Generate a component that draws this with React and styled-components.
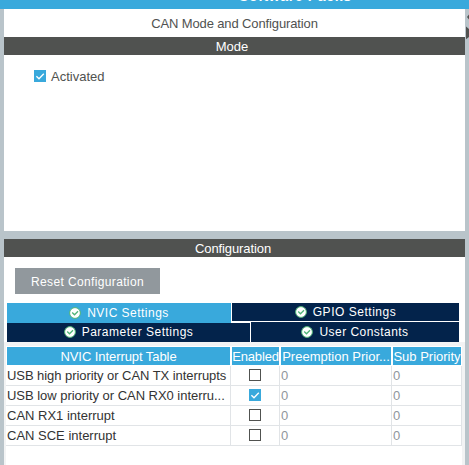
import React from "react";
import styled, { createGlobalStyle } from "styled-components";

const Global = createGlobalStyle`
  * { box-sizing: border-box; }
  body { margin: 0; overflow: hidden; }
`;

const Window = styled.div`
  width: 469px;
  height: 465px;
  overflow: hidden;
  display: flex;
  flex-direction: column;
  background: #b9c4ca;
  color: #505250;
  font: 13px/18px "Liberation Sans", Arial, sans-serif;
  white-space: nowrap;
`;

const TopBar = styled.header`
  height: 9px;
  flex: none;
  display: flex;
  align-items: flex-end;
  padding: 0 0 5px 239px;
  overflow: hidden;
  background: #39a9dc;
  color: #fff;
  font-weight: bold;
  font-size: 14px;
  line-height: 16px;
  letter-spacing: 0.65px;
`;

const Body = styled.div`
  flex: 1;
  display: grid;
  grid-template-columns: 4px 461px 4px;
`;

const Content = styled.main`
  grid-column: 2;
  display: flex;
  flex-direction: column;
  gap: 8px;
`;

const Scroller = styled.svg`
  grid-column: 3;
  display: block;
`;

const Panel = styled.section`
  height: ${(p) => p.$height}px;
  flex: none;
  display: flex;
  flex-direction: column;
  background: #fff;
`;

const Text = styled.span`
  letter-spacing: ${(p) => p.$spacing || 0}px;
`;

const ButtonText = styled.span`
  font-size: 12px;
  letter-spacing: ${(p) => p.$spacing}px;
`;

const Title = styled.div`
  height: 28px;
  padding-top: 6px;
  text-align: center;
`;

const SectionBar = styled.div`
  height: 18px;
  flex: none;
  text-align: center;
  background: #505250;
  color: #fff;
  padding: 1px ${(p) => p.$shift || 0}px 0 0;
`;

const Option = styled.label`
  display: flex;
  align-items: center;
  gap: 5px;
  padding: 11px 0 0 30px;

  ${Text} {
    padding-top: 2px;
  }
`;

const ResetButton = styled.button`
  width: 145px;
  height: 26px;
  flex: none;
  margin: 11px 0 9px 11px;
  padding: 2px 0 0;
  border: 0;
  background: #91989d;
  color: #fff;
  font: inherit;
`;

const Tabs = styled.nav`
  width: 452px;
  margin-left: 3px;
  flex: none;
`;

const TabRow = styled.div`
  display: grid;
  grid-template-columns: ${(p) => p.$columns};
  column-gap: 1px;
  height: ${(p) => p.$height}px;
`;

const Tab = styled.div`
  display: flex;
  align-items: center;
  justify-content: center;
  gap: 6px;
  height: ${(p) => p.$height}px;
  margin-top: ${(p) => p.$raise || 0}px;
  padding-bottom: ${(p) => p.$lift || 0}px;
  background: ${(p) => (p.$active ? "#39a9dc" : "#03234b")};
  color: #fff;
`;

const TableArea = styled.div`
  flex: 1;
  padding: 4px 3px 0 2px;
  background: #f2f3f4;
`;

const Table = styled.div`
  height: 100%;
  background: #fff;
`;

const columns = "225px 49px 112px 70px";

const HeadRow = styled.div`
  display: grid;
  grid-template-columns: ${columns};
  height: 20px;
  padding-top: 1px;
`;

const HeadCell = styled.div`
  height: 18px;
  margin: 0 1px 0 1px;
  padding-top: 1px;
  background: #39a9dc;
  color: #fff;
  text-align: center;
  overflow: hidden;
`;

const Row = styled.div`
  display: grid;
  grid-template-columns: ${columns};
  height: 20px;
`;

const Cell = styled.div`
  padding: 1px 0 0 1px;
  border-right: 1px solid #e1e4e7;
  border-bottom: 1px solid #e1e4e7;
  color: ${(p) => (p.$muted ? "#8f969c" : "#333")};
`;

const CheckCell = styled(Cell)`
  display: flex;
  justify-content: center;
  padding: 3px 0 0;
`;

const Check = ({ on }) => (
  <svg width="12" height="12" viewBox="0 0 12 12">
    {on ? (
      <>
        <rect width="12" height="12" fill="#39a9dc" />
        <path d="M2.4 6.2 5 8.8 9.8 3.7" fill="none" stroke="#fff" strokeWidth="1.3" />
      </>
    ) : (
      <rect x=".5" y=".5" width="11" height="11" fill="#fff" stroke="#505250" />
    )}
  </svg>
);

const StatusIcon = () => (
  <svg width="12" height="12" viewBox="0 0 12 12">
    <circle cx="6" cy="6" r="5.4" fill="#fff" stroke="#4fb477" />
    <path d="M3.2 5.5 5.5 7.8 9 4.2" fill="none" stroke="#4fb477" strokeWidth="1.3" />
  </svg>
);

const rows = [
  { name: "USB high priority or CAN TX interrupts", spacing: -0.06 },
  { name: "USB low priority or CAN RX0 interru...", spacing: -0.03 },
  { name: "CAN RX1 interrupt", spacing: 0 },
  { name: "CAN SCE interrupt", spacing: 0 },
];
const enabledRow = 1;

export default function App() {
  return (
    <>
      <Global />
      <Window>
        <TopBar>Software Packs</TopBar>
        <Body>
          <Content>
            <Panel $height={222}>
              <Title><Text $spacing={-0.12}>CAN Mode and Configuration</Text></Title>
              <SectionBar $shift={5}><Text>Mode</Text></SectionBar>
              <Option><Check on /><Text>Activated</Text></Option>
            </Panel>
            <Panel $height={226}>
              <SectionBar $shift={3}><Text $spacing={-0.1}>Configuration</Text></SectionBar>
              <ResetButton><ButtonText $spacing={0.36}>Reset Configuration</ButtonText></ResetButton>
              <Tabs>
                <TabRow $columns="224px 1fr" $height={19}>
                  <Tab $active $height={20} $lift={1}><StatusIcon /><ButtonText $spacing={0.48}>NVIC Settings</ButtonText></Tab>
                  <Tab $height={18}><StatusIcon /><ButtonText $spacing={0.52}>GPIO Settings</ButtonText></Tab>
                </TabRow>
                <TabRow $columns="243px 1fr" $height={20}>
                  <Tab $height={19} $raise={1} $lift={2}><StatusIcon /><ButtonText $spacing={0.5}>Parameter Settings</ButtonText></Tab>
                  <Tab $height={20} $lift={1}><StatusIcon /><ButtonText $spacing={0.46}>User Constants</ButtonText></Tab>
                </TabRow>
              </Tabs>
              <TableArea>
                <Table>
                  <HeadRow>
                    <HeadCell><Text $spacing={-0.07}>NVIC Interrupt Table</Text></HeadCell>
                    <HeadCell><Text $spacing={-0.15}>Enabled</Text></HeadCell>
                    <HeadCell><Text>Preemption Prior...</Text></HeadCell>
                    <HeadCell><Text>Sub Priority</Text></HeadCell>
                  </HeadRow>
                  {rows.map((r, i) => (
                    <Row key={r.name}>
                      <Cell><Text $spacing={r.spacing}>{r.name}</Text></Cell>
                      <CheckCell><Check on={i === enabledRow} /></CheckCell>
                      <Cell $muted>0</Cell>
                      <Cell $muted>0</Cell>
                    </Row>
                  ))}
                </Table>
              </TableArea>
            </Panel>
          </Content>
          <Scroller width="4" height="456" viewBox="0 0 4 456">
            <path d="M4 5.5 2 8l2 2.5zM1 17.5 4 20v8l-3 2.3z" fill="#505250" />
          </Scroller>
        </Body>
      </Window>
    </>
  );
}
